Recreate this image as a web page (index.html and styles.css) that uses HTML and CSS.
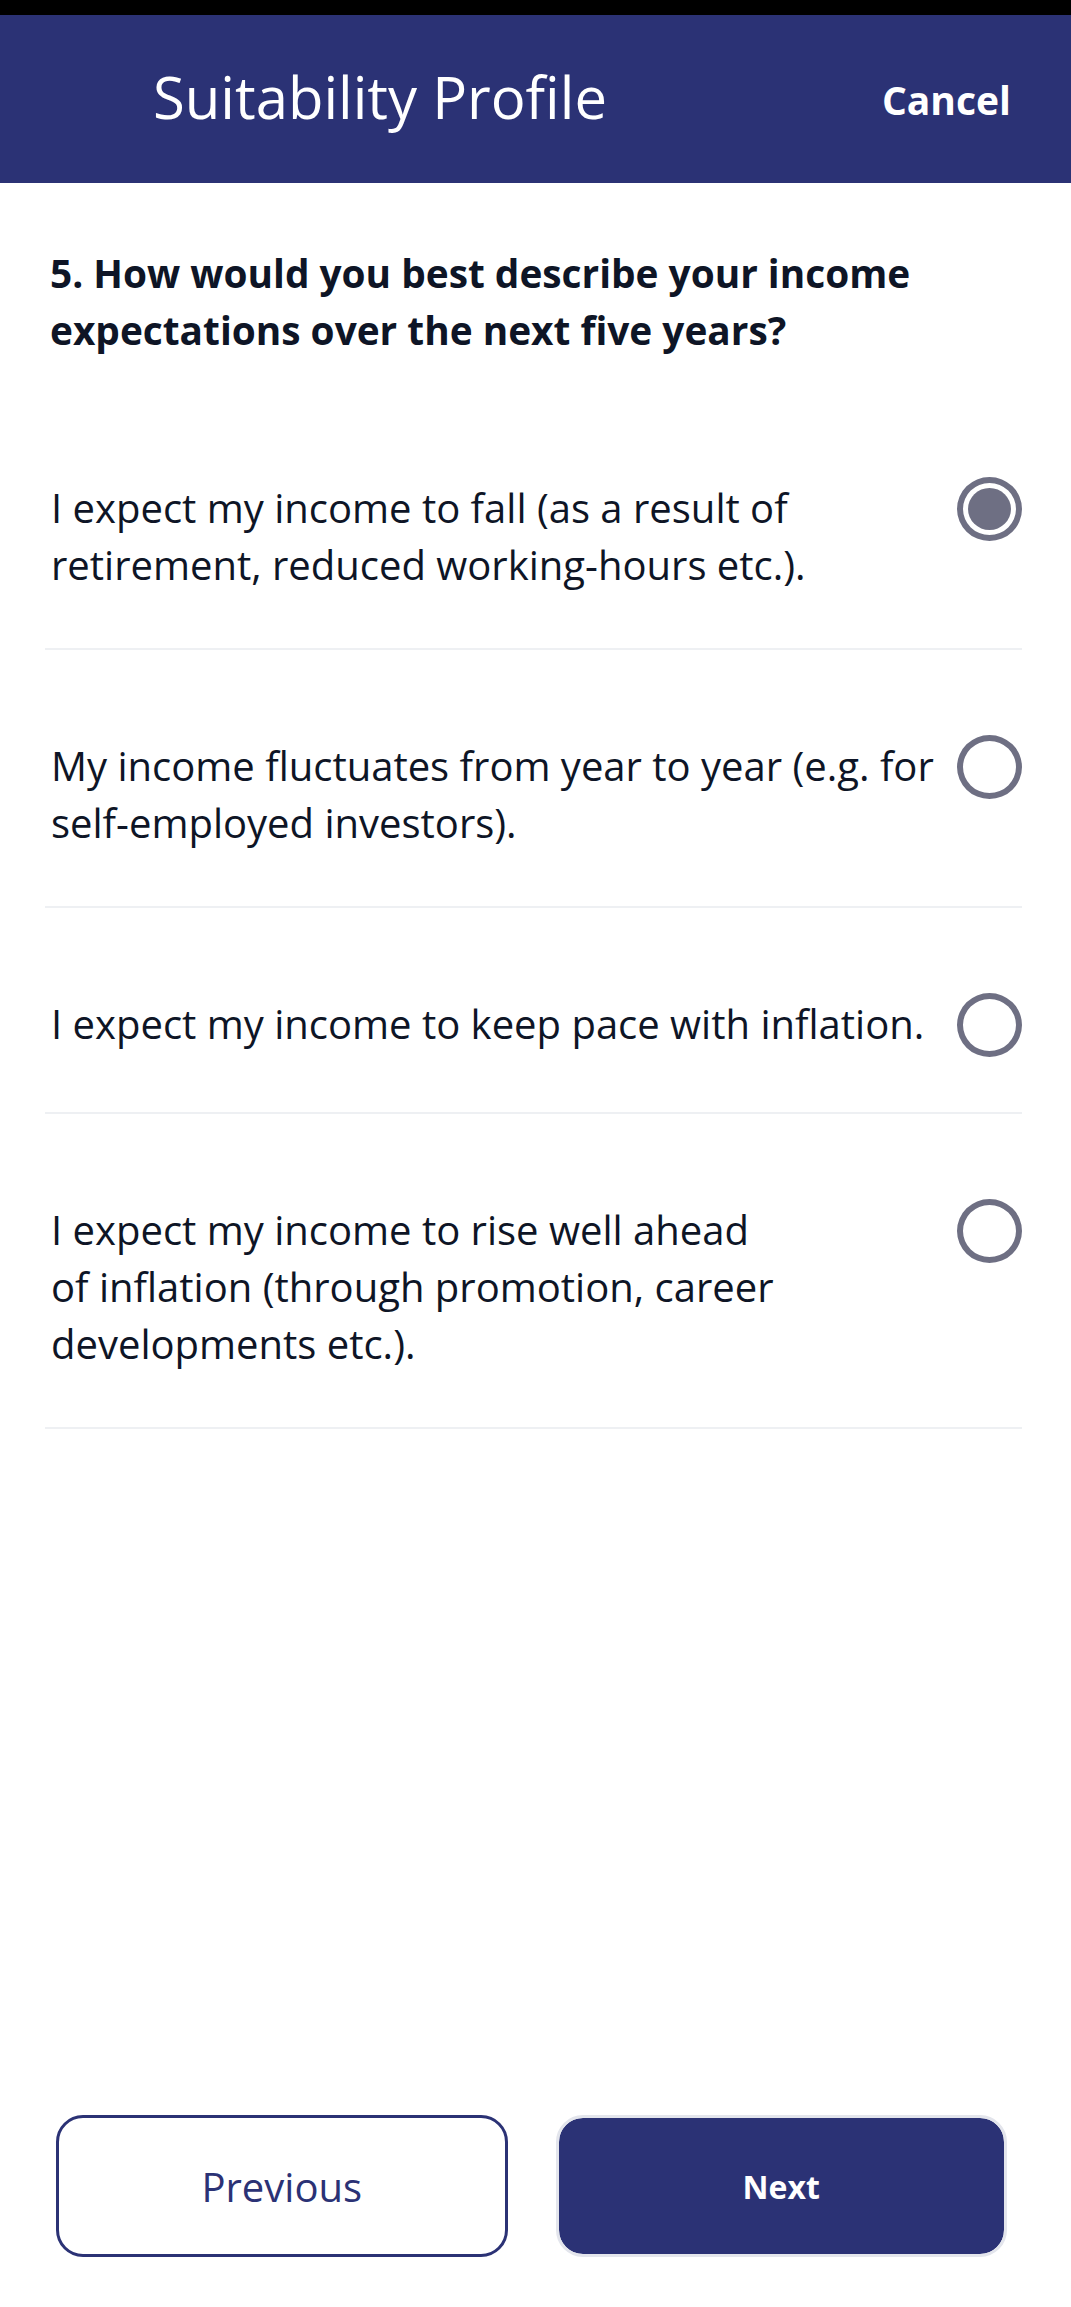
FILE: index.html
```html
<!DOCTYPE html>
<html lang="en">
<head>
<meta charset="utf-8">
<title>Suitability Profile</title>
<link rel="stylesheet" href="styles.css">
</head>
<body>
<div class="screen">
  <div class="status-bar"></div>
  <header class="topbar">
    <h1 class="topbar-title">Suitability Profile</h1>
    <span class="topbar-action">Cancel</span>
  </header>
  <main class="content">
    <h2 class="question">5. How would you best describe your income<br>expectations over the next five years?</h2>
    <ul class="options">
      <li class="option">
        <p class="option-text">I expect my income to fall (as a result of<br>retirement, reduced working-hours etc.).</p>
        <span class="radio radio-checked"></span>
      </li>
      <li class="option">
        <p class="option-text">My income fluctuates from year to year (e.g. for<br>self-employed investors).</p>
        <span class="radio"></span>
      </li>
      <li class="option">
        <p class="option-text">I expect my income to keep pace with inflation.</p>
        <span class="radio"></span>
      </li>
      <li class="option">
        <p class="option-text">I expect my income to rise well ahead<br>of inflation (through promotion, career<br>developments etc.).</p>
        <span class="radio"></span>
      </li>
    </ul>
  </main>
  <footer class="actions">
    <button class="btn btn-outline" type="button">Previous</button>
    <button class="btn btn-primary" type="button">Next</button>
  </footer>
</div>
</body>
</html>
```

FILE: styles.css
```css
* {
  box-sizing: border-box;
}

html, body {
  margin: 0;
  padding: 0;
  background: #ffffff;
}

body {
  font-family: "Open Sans", "Noto Sans", "Liberation Sans", sans-serif;
  color: #0e1526;
}

.screen {
  display: flex;
  flex-direction: column;
  min-height: 100vh;
}

.status-bar {
  height: 15px;
  background: #000000;
}

.topbar {
  height: 168px;
  background: #2b3275;
  display: flex;
  align-items: center;
  justify-content: space-between;
  padding: 0 60px 0 153px;
}

.topbar-title {
  margin: 0;
  font-size: 58px;
  font-weight: 400;
  color: #ffffff;
  line-height: 1;
  position: relative;
  top: -2px;
}

.topbar-action {
  font-size: 39px;
  font-weight: 700;
  color: #ffffff;
  line-height: 1;
}

.content {
  flex: 1;
  padding: 62px 49px 0 45px;
}

.question {
  margin: 0 0 33px;
  padding-left: 5px;
  font-size: 38.8px;
  font-weight: 700;
  line-height: 57px;
  color: #0e1526;
}

.options {
  list-style: none;
  margin: 0;
  padding: 0;
}

.option {
  display: flex;
  align-items: flex-start;
  justify-content: space-between;
  padding: 87px 0 55px;
  border-bottom: 2px solid #eef0f3;
}

.option-text {
  margin: 0;
  padding-left: 6px;
  font-size: 40px;
  line-height: 57px;
  white-space: nowrap;
  color: #0e1526;
}

.radio {
  flex: none;
  width: 65px;
  height: 64px;
  border: 6px solid #6e6f83;
  border-radius: 50%;
  margin-top: -2px;
  margin-left: 20px;
}

.radio-checked {
  padding: 5px;
  background: #6e6f83;
  background-clip: content-box;
}

.actions {
  display: flex;
  gap: 48px;
  padding: 0 64px 50px 56px;
}

.btn {
  flex: 1;
  height: 142px;
  border-radius: 27px;
  font-family: "Open Sans", "Noto Sans", "Liberation Sans", sans-serif;
  display: flex;
  align-items: center;
  justify-content: center;
  cursor: pointer;
}

.btn-outline {
  background: #ffffff;
  border: 3px solid #2b3275;
  color: #2b3275;
  font-size: 40px;
  font-weight: 400;
}

.btn-primary {
  background: #2b3275;
  border: 3px solid #e3e5ec;
  background-clip: padding-box;
  color: #ffffff;
  font-size: 32px;
  font-weight: 700;
}
```
